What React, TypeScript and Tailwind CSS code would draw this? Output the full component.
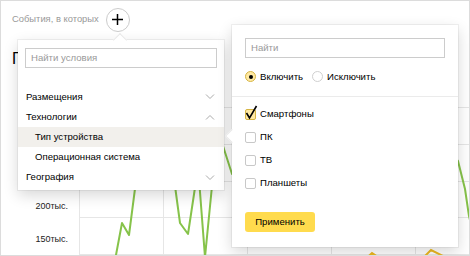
import React from "react";

const Chevron = ({ up }: { up?: boolean }) => (
  <svg width="10" height="6" viewBox="0 0 10 6" className="text-[#aaa]">
    <path d={up ? "M1 5.5 L5 1.5 L9 5.5" : "M1 0.5 L5 4.5 L9 0.5"} fill="none" stroke="currentColor" strokeWidth="1" />
  </svg>
);

const Radio = ({ on, label }: { on?: boolean; label: string }) => (
  <label className="flex items-center gap-[4px]">
    <span
      className={
        "flex h-[11px] w-[11px] items-center justify-center rounded-full border " +
        (on ? "border-[#d6b544] bg-[#ffe9a3]" : "border-[#d0d0d0] bg-white")
      }
    >
      {on && <span className="h-[4px] w-[4px] rounded-full bg-black" />}
    </span>
    <span>{label}</span>
  </label>
);

const Check = ({ on, label }: { on?: boolean; label: string }) => (
  <div className="flex h-[23px] items-center gap-[4px]">
    <span
      className={
        "relative block h-[11px] w-[11px] rounded-[2px] border " +
        (on ? "border-[#d6b544] bg-[#ffe9a3]" : "border-[#c8c8c8] bg-white")
      }
    >
      {on && (
        <svg className="absolute -left-[1px] -top-[5px]" width="13" height="15" viewBox="0 0 13 15">
          <path d="M1.5 8 L4.5 13 L11.5 1" fill="none" stroke="#000" strokeWidth="1.6" />
        </svg>
      )}
    </span>
    <span>{label}</span>
  </div>
);

export default function App() {
  const labels = ["350тыс.", "300тыс.", "250тыс.", "200тыс.", "150тыс."];
  return (
    <div
      className="relative h-[256px] w-[470px] overflow-hidden border border-[#dcdcdc] bg-white text-black"
      style={{ fontFamily: '"Liberation Sans", Arial, sans-serif' }}
    >
      {/* header */}
      <div className="flex h-[37px] items-center pl-[11px]">
        <span className="text-[9.4px] text-[#999]">События, в которых</span>
        <button className="ml-[7px] flex h-[24px] w-[24px] items-center justify-center rounded-full border border-[#ccc] bg-white">
          <svg width="11" height="11" viewBox="0 0 11 11">
            <path d="M5.5 0 V11 M0 5.5 H11" stroke="#000" strokeWidth="1.5" />
          </svg>
        </button>
      </div>
      <div className="pl-[11px] pt-[11px] text-[16px] leading-[20px]">Пользователи</div>

      {/* chart */}
      <div className="absolute left-0 top-[88px] flex h-[168px] w-[470px]">
        <div className="flex w-[78px] flex-col pr-[11px] text-right text-[9px] text-[#222]">
          {labels.map((l) => (
            <div key={l} className="flex h-[36.75px] items-center justify-end">
              {l}
            </div>
          ))}
        </div>
        <svg width="392" height="168" viewBox="0 0 392 168" className="block">
          {[0, 84, 168, 252, 336].map((x) => (
            <line key={x} x1={x + 0.5} y1="0" x2={x + 0.5} y2="168" stroke="#e6e6e6" />
          ))}
          {[18, 55, 92, 128, 165].map((y) => (
            <line key={y} x1="0" y1={y + 0.5} x2="392" y2={y + 0.5} stroke="#e6e6e6" />
          ))}
          <polyline
            points="30,200 34,182 43,134 50,146 57,92 71,32 91,62 96,97 101,134 109,145 117,92 120,90 126,168 133,97 139,32 144,57 153,85 221,62 321,12 379,72 386,100 390,127 396,152"
            fill="none"
            stroke="#86c34a"
            strokeWidth="2"
            strokeLinejoin="round"
          />
          <polyline
            points="280,176 293,164 302,170 340,173 352,161 364,167 400,170"
            fill="none"
            stroke="#ecb821"
            strokeWidth="2"
          />
        </svg>
      </div>

      {/* left popup */}
      <div className="absolute left-[17px] top-[39px] h-[150px] w-[206px] bg-white text-[9.6px] shadow-[0_0_0_1px_rgba(0,0,0,0.05),0_5px_14px_rgba(0,0,0,0.16)]">
        <div className="absolute left-[97px] -top-[5px] h-[10px] w-[10px] rotate-45 border-l border-t border-[#e8e8e8] bg-white" />
        <div className="relative px-[7px] pt-[8px]">
          <div className="flex h-[20px] items-center border border-[#ccc] pl-[5px] text-[#999]">
            Найти условия
          </div>
        </div>
        <div className="relative mt-[19px] flex flex-col">
          <div className="flex h-[20px] items-center justify-between pl-[8px] pr-[9px]">
            <span>Размещения</span>
            <Chevron />
          </div>
          <div className="flex h-[20px] items-center justify-between pl-[8px] pr-[9px]">
            <span>Технологии</span>
            <Chevron up />
          </div>
          <div className="flex h-[20px] items-center bg-[#f2f0ec] pl-[17px]">Тип устройства</div>
          <div className="flex h-[21px] items-center pl-[17px]">Операционная система</div>
          <div className="flex h-[19px] items-center justify-between pl-[8px] pr-[9px]">
            <span>География</span>
            <Chevron />
          </div>
        </div>
      </div>

      {/* right popup */}
      <div className="absolute left-[231px] top-[24px] h-[222px] w-[226px] bg-white text-[9.6px] shadow-[0_0_0_1px_rgba(0,0,0,0.05),0_5px_14px_rgba(0,0,0,0.16)]">
        <div className="absolute -left-[5px] top-[106px] h-[10px] w-[10px] rotate-45 border-b border-l border-[#e8e8e8] bg-white" />
        <div className="relative px-[13px] pt-[13px]">
          <div className="flex h-[20px] items-center border border-[#ccc] pl-[5px] text-[#999]">
            Найти
          </div>
          <div className="mt-[9px] flex h-[20px] items-center gap-[9px]">
            <Radio on label="Включить" />
            <Radio label="Исключить" />
          </div>
        </div>
        <div className="relative mt-[9px] border-t border-[#ebebeb]" />
        <div className="relative flex flex-col px-[13px] pt-[6px]">
          <Check on label="Смартфоны" />
          <Check label="ПК" />
          <Check label="ТВ" />
          <Check label="Планшеты" />
          <button className="mt-[17px] flex h-[20px] w-[70px] items-center justify-center rounded-[3px] bg-[#ffdb4d] text-black">
            Применить
          </button>
        </div>
      </div>
    </div>
  );
}
